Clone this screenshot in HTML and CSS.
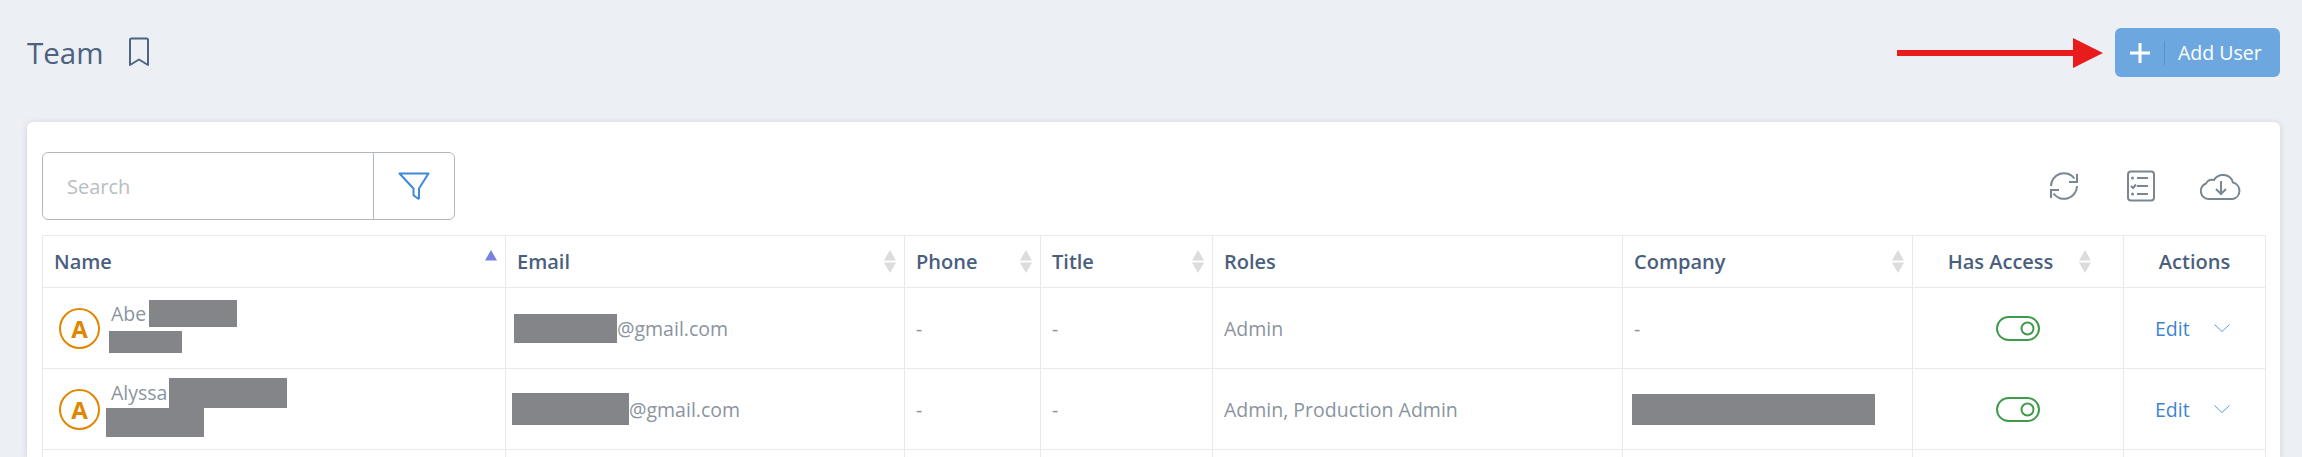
FILE: index.html
```html
<!DOCTYPE html>
<html lang="en">
<head>
    <meta charset="UTF-8">
    <title>Team</title>
    <link rel="stylesheet" href="styles.css">
</head>
<body>
<div class="page">
    <div class="top">
        <h1 class="title">Team</h1>
        <svg class="bookmark" viewBox="0 0 22 30"><path d="M2 3q0-1.500 1.500-1.500h15q1.500 0 1.500 1.500V28L11 22.500 2 28Z"/></svg>
        <svg class="arrow" viewBox="0 0 206 30"><path d="M0 12h176V0l30 15-30 15V18H0Z"/></svg>
        <button class="add_btn">
            <svg class="plus" viewBox="0 0 20 20"><path d="M10 0v20M0 10h20"/></svg>
            <span class="add_sep"></span>
            <span>Add User</span>
        </button>
    </div>
    <div class="card">
        <div class="toolbar">
            <div class="search">
                <div class="search_input">Search</div>
                <div class="search_filter">
                    <svg viewBox="0 0 32 28"><path d="M1.500 1.500h29L21 16.500v9.500q0 1-1 .500l-3.500-2.500q-1-.500-1-1.500v-6Z"/></svg>
                </div>
            </div>
            <div class="tools">
                <svg class="tool" viewBox="0 0 32 32"><path d="M3 16A13 13 0 0 1 26.500 8.500M29 16A13 13 0 0 1 5.500 23.500M29 4v8h-8M3 28v-8h8"/></svg>
                <svg class="tool tool_list" viewBox="0 0 32 32"><rect x="3" y="1.500" width="26" height="29" rx="3"/><path d="M12 8h11M12 16h11M12 24h11M6 16l2 2 3-3.500"/><circle class="tool_dot" cx="7.500" cy="8" r="1.500"/><circle class="tool_dot" cx="7.500" cy="24" r="1.500"/></svg>
                <svg class="tool tool_cloud" viewBox="0 0 44 32"><path d="M10 29A8 8 0 0 1 7 13.500 7 7 0 0 1 15 10 10.500 10.500 0 0 1 34 12.500 8.500 8.500 0 0 1 34 29ZM22 11v13M17 19l5 5 5-5"/></svg>
            </div>
        </div>
        <table class="grid">
            <colgroup>
                <col class="col_name">
                <col class="col_email">
                <col class="col_phone">
                <col class="col_title">
                <col class="col_roles">
                <col class="col_company">
                <col class="col_access">
                <col class="col_actions">
            </colgroup>
            <thead>
            <tr>
                <th><div class="th_in">Name<svg class="sort" viewBox="0 0 12 23"><path class="sort_on" d="M6 0l6 10.500H0Z"/></svg></div></th>
                <th><div class="th_in">Email<svg class="sort" viewBox="0 0 12 23"><path d="M6 0l6 10.500H0ZM6 23l6-10.500H0Z"/></svg></div></th>
                <th><div class="th_in">Phone<svg class="sort" viewBox="0 0 12 23"><path d="M6 0l6 10.500H0ZM6 23l6-10.500H0Z"/></svg></div></th>
                <th><div class="th_in">Title<svg class="sort" viewBox="0 0 12 23"><path d="M6 0l6 10.500H0ZM6 23l6-10.500H0Z"/></svg></div></th>
                <th><div class="th_in">Roles</div></th>
                <th><div class="th_in">Company<svg class="sort" viewBox="0 0 12 23"><path d="M6 0l6 10.500H0ZM6 23l6-10.500H0Z"/></svg></div></th>
                <th><div class="th_in th_center">Has Access<svg class="sort" viewBox="0 0 12 23"><path d="M6 0l6 10.500H0ZM6 23l6-10.500H0Z"/></svg></div></th>
                <th class="center">Actions</th>
            </tr>
            </thead>
            <tbody>
            <tr>
                <td>
                    <div class="user">
                        <div class="avatar">A</div>
                        <div class="user_text">
                            <div class="user_name">Abe<span class="hide hide_n1"></span></div>
                            <span class="hide hide_s1"></span>
                        </div>
                    </div>
                </td>
                <td><div class="mail"><span class="hide hide_m1"></span>@gmail.com</div></td>
                <td>-</td>
                <td>-</td>
                <td>Admin</td>
                <td>-</td>
                <td>
                    <svg class="toggle" viewBox="0 0 44 25"><rect x="1" y="1" width="42" height="23" rx="11.500"/><circle cx="31.500" cy="12.500" r="6"/></svg>
                </td>
                <td>
                    <div class="actions">
                        <span class="edit">Edit</span>
                        <svg class="chev" viewBox="0 0 16 8"><path d="M.5.500 8 7.500 15.500.500"/></svg>
                    </div>
                </td>
            </tr>
            <tr>
                <td>
                    <div class="user">
                        <div class="avatar">A</div>
                        <div class="user_text">
                            <div class="user_name">Alyssa<span class="hide hide_n2"></span></div>
                            <span class="hide hide_s2"></span>
                        </div>
                    </div>
                </td>
                <td><div class="mail"><span class="hide hide_m2"></span>@gmail.com</div></td>
                <td>-</td>
                <td>-</td>
                <td>Admin, Production Admin</td>
                <td><span class="hide hide_c2"></span></td>
                <td>
                    <svg class="toggle" viewBox="0 0 44 25"><rect x="1" y="1" width="42" height="23" rx="11.500"/><circle cx="31.500" cy="12.500" r="6"/></svg>
                </td>
                <td>
                    <div class="actions">
                        <span class="edit">Edit</span>
                        <svg class="chev" viewBox="0 0 16 8"><path d="M.5.500 8 7.500 15.500.500"/></svg>
                    </div>
                </td>
            </tr>
            <tr>
                <td></td><td></td><td></td><td></td><td></td><td></td><td></td><td></td>
            </tr>
            </tbody>
        </table>
    </div>
</div>
</body>
</html>
```

FILE: styles.css
```css
html, body {
    margin: 0;
    height: 457px;
    overflow: hidden;
    background: #eceff4;
    font-family: "Open Sans", sans-serif;
}

.page {
    padding: 28px 22px 0 27px;
}

.top {
    display: flex;
    align-items: center;
    height: 49px;
    margin-bottom: 45px;
}

.title {
    margin: 0;
    font-size: 29.500px;
    font-weight: 400;
    color: #4d6280;
}

.bookmark {
    width: 22px;
    height: 30px;
    margin-left: 24px;
    margin-top: -2px;
    fill: none;
    stroke: #4f6480;
    stroke-width: 2;
    stroke-linejoin: round;
}

.arrow {
    width: 206px;
    height: 30px;
    margin-left: auto;
    margin-right: 12px;
    fill: #e81c1c;
}

.add_btn {
    display: flex;
    align-items: center;
    width: 165px;
    height: 49px;
    padding: 0 0 0 15px;
    border: 0;
    border-radius: 6px;
    background: #6ca7e0;
    color: #fff;
    font-family: inherit;
    font-size: 19.500px;
}

.plus {
    width: 20px;
    height: 20px;
    fill: none;
    stroke: #fff;
    stroke-width: 3;
}

.add_sep {
    width: 1px;
    height: 24px;
    margin: 0 13px 0 14px;
    background: #5a93cb;
}

.card {
    box-sizing: border-box;
    height: 335px;
    padding: 30px 15px 0;
    overflow: hidden;
    background: #fff;
    border-radius: 6px 6px 0 0;
    box-shadow: 0 1px 6px rgba(60, 75, 100, 0.18);
}

.toolbar {
    display: flex;
    align-items: center;
    height: 68px;
    margin-bottom: 15px;
}

.search {
    display: flex;
    width: 413px;
    height: 68px;
    box-sizing: border-box;
    border: 1px solid #b1b7bc;
    border-radius: 6px;
}

.search_input {
    flex: 1;
    display: flex;
    align-items: center;
    padding-left: 24px;
    font-size: 20px;
    color: #b7bdc4;
    border-right: 1px solid #b1b7bc;
}

.search_filter {
    display: flex;
    width: 80px;
    align-items: center;
    justify-content: center;
}

.search_filter svg {
    width: 32px;
    height: 28px;
    fill: none;
    stroke: #4089d8;
    stroke-width: 2;
    stroke-linejoin: round;
}

.tools {
    display: flex;
    align-items: center;
    margin-left: auto;
    margin-right: 22px;
}

.tool {
    width: 32px;
    height: 32px;
    fill: none;
    stroke: #7a8791;
    stroke-width: 2;
}

.tool_list {
    margin-left: 45px;
}

.tool_dot {
    fill: #7a8791;
    stroke: none;
}

.tool_cloud {
    width: 44px;
    margin-left: 42px;
}

.grid {
    width: 2223px;
    table-layout: fixed;
    border-collapse: collapse;
}

.col_name { width: 463px; }
.col_email { width: 399px; }
.col_phone { width: 136px; }
.col_title { width: 172px; }
.col_roles { width: 410px; }
.col_company { width: 290px; }
.col_access { width: 211px; }
.col_actions { width: 142px; }

.grid th,
.grid td {
    border: 1px solid #e8eaec;
    padding: 0 8px 0 11px;
    text-align: left;
    vertical-align: middle;
    white-space: nowrap;
}

.grid th {
    height: 51px;
    font-size: 20px;
    font-weight: 600;
    color: #4a5f7d;
}

.grid td {
    height: 80px;
    font-size: 19.500px;
    color: #8a949e;
}

.grid .center {
    padding: 0;
    text-align: center;
}

.th_in {
    display: flex;
    align-items: center;
    justify-content: space-between;
}

.th_center {
    justify-content: center;
    gap: 26px;
}

.sort {
    width: 12px;
    height: 23px;
    fill: #dcdcdc;
}

.sort_on {
    fill: #7a80e0;
}

.user {
    display: flex;
    align-items: center;
}

.avatar {
    display: flex;
    align-items: center;
    justify-content: center;
    width: 41px;
    height: 41px;
    box-sizing: border-box;
    margin: 0 11px 0 5px;
    border: 2px solid #e08600;
    border-radius: 50%;
    font-size: 24px;
    font-weight: 700;
    color: #e08600;
}

.user_text {
    margin-top: -4px;
}

.user_name {
    display: flex;
    align-items: center;
}

.hide {
    display: block;
    background: #848588;
}

.hide_n1 { width: 88px; height: 27px; margin-left: 3px; }
.hide_s1 { width: 73px; height: 22px; margin: 4px 0 0 -2px; }
.hide_n2 { width: 118px; height: 30px; margin-left: 2px; }
.hide_s2 { width: 98px; height: 29px; margin-left: -5px; }
.hide_m1 { width: 103px; height: 29px; margin-left: -3px; }
.hide_m2 { width: 117px; height: 32px; margin-left: -5px; }
.hide_c2 { width: 243px; height: 31px; margin-left: -2px; }

.mail {
    display: flex;
    align-items: center;
}

.toggle {
    display: block;
    width: 44px;
    height: 25px;
    margin-left: 72px;
    fill: none;
    stroke: #3f9a4b;
    stroke-width: 2;
}

.actions {
    display: flex;
    align-items: center;
    padding-left: 20px;
}

.edit {
    font-size: 19.500px;
    color: #3d85d0;
}

.chev {
    width: 16px;
    height: 8px;
    margin-left: 24px;
    fill: none;
    stroke: #5a9ae0;
    stroke-width: 1;
}
```
